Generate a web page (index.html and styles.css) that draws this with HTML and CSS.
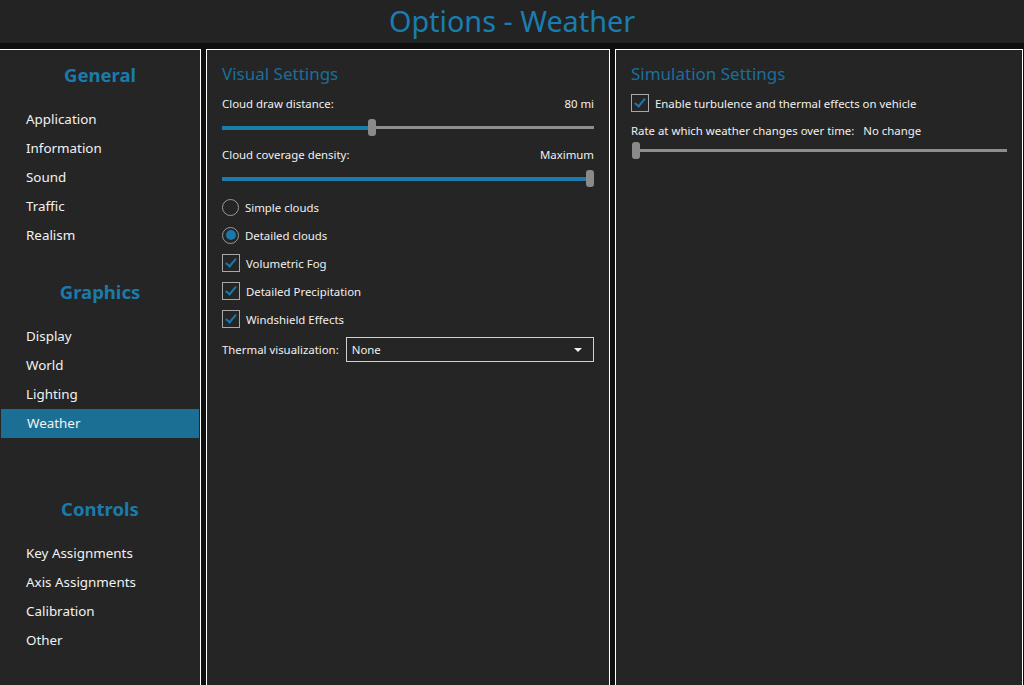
FILE: index.html
```html
<!DOCTYPE html>
<html lang="en">
  <head>
    <meta charset="UTF-8" />
    <meta name="viewport" content="width=device-width, initial-scale=1.0" />
    <title>Options - Weather</title>
    <link rel="stylesheet" href="styles.css">
  </head>
  <body>
    <div id="heading"><h1>Options - Weather</h1></div>
    <div class="panels">
      <div class="sidebar">
        <h2>General</h2>
        <ul class="menu">
          <li>Application</li>
          <li>Information</li>
          <li>Sound</li>
          <li>Traffic</li>
          <li>Realism</li>
        </ul>
        <h2>Graphics</h2>
        <ul class="menu">
          <li>Display</li>
          <li>World</li>
          <li>Lighting</li>
          <li class="active">Weather</li>
        </ul>
        <h2 class="controls">Controls</h2>
        <ul class="menu">
          <li>Key Assignments</li>
          <li>Axis Assignments</li>
          <li>Calibration</li>
          <li>Other</li>
        </ul>
      </div>

      <div class="box visual">
        <h3>Visual Settings</h3>
        <div class="row">
          <span>Cloud draw distance:</span>
          <span>80 mi</span>
        </div>
        <div class="slider">
          <div class="fill" style="width: 146px"></div>
          <div class="thumb"></div>
          <div class="rest"></div>
        </div>
        <div class="row">
          <span>Cloud coverage density:</span>
          <span>Maximum</span>
        </div>
        <div class="slider last">
          <div class="fill full"></div>
          <div class="thumb"></div>
        </div>
        <div class="option"><span class="radio"></span>Simple clouds</div>
        <div class="option"><span class="radio on"></span>Detailed clouds</div>
        <div class="option"><span class="check"></span>Volumetric Fog</div>
        <div class="option"><span class="check"></span>Detailed Precipitation</div>
        <div class="option"><span class="check"></span>Windshield Effects</div>
        <div class="thermal">
          <span>Thermal visualization:</span>
          <div class="select">None <span class="arrow"></span></div>
        </div>
      </div>

      <div class="box sim">
        <h3>Simulation Settings</h3>
        <div class="option"><span class="check"></span>Enable turbulence and thermal effects on vehicle</div>
        <div class="rate">Rate at which weather changes over time:&nbsp;&nbsp; No change</div>
        <div class="slider">
          <div class="thumb"></div>
          <div class="rest"></div>
        </div>
      </div>
    </div>
  </body>
</html>
```

FILE: styles.css
```css
body {
  margin: 0;
  padding: 0;
  font-family: "Noto Sans", "Open Sans", sans-serif;
  background: #0f0f0f;
  color: #f0f0f0;
  height: 685px;
  overflow: hidden;
}

#heading {
  height: 43px;
  background: #232323;
  text-align: center;
}
#heading h1 {
  margin: 0;
  font-weight: normal;
  font-size: 28.8px;
  line-height: 42px;
  color: #1a7db0;
}

.panels {
  display: flex;
  gap: 5px;
  padding-top: 6px;
  height: 636px;
}

.sidebar {
  width: 200px;
  background: #252525;
  border: 1px solid #fff;
  border-left: none;
  border-bottom: none;
}
.sidebar h2 {
  margin: 13px 0 18px;
  text-align: center;
  font-size: 18.5px;
  line-height: 24px;
  color: #1a7bab;
}
.sidebar h2.controls {
  margin-top: 59px;
}
.menu {
  list-style: none;
  margin: 0 0 30px;
  padding: 0;
}
.menu li {
  height: 29px;
  line-height: 29px;
  padding-left: 26px;
  font-size: 13.4px;
  color: #f2f2f2;
}
.menu li.active {
  background: #1b6f94;
  margin: 0 1px;
}

.box {
  background: #252525;
  border: 1px solid #fff;
  border-bottom: none;
  padding: 12px 15px 0;
  font-size: 11.4px;
}
.visual {
  width: 372px;
}
.sim {
  width: 376px;
}
.box h3 {
  margin: 0 0 10px;
  font-weight: normal;
  font-size: 17px;
  line-height: 24px;
  color: #1a6e9b;
}

.row {
  display: flex;
  justify-content: space-between;
  line-height: 16px;
}

.slider {
  display: flex;
  align-items: center;
  height: 17px;
  margin: 7px 0 11px;
}
.slider.last {
  margin-bottom: 6px;
}
.fill {
  height: 4px;
  background: #1b7cac;
}
.fill.full {
  flex: 1;
}
.rest {
  flex: 1;
  height: 3px;
  background: #8e8e8e;
}
.thumb {
  width: 8px;
  height: 17px;
  border-radius: 3px;
  background: #8a8a8a;
}

.option {
  display: flex;
  align-items: center;
  height: 28px;
}
.radio, .check {
  width: 15px;
  height: 15px;
  margin-right: 6px;
  box-sizing: content-box;
}
.radio {
  border: 1.5px solid #9a9a9a;
  border-radius: 50%;
  position: relative;
}
.radio.on::after {
  content: "";
  position: absolute;
  left: 2.5px;
  top: 2.5px;
  width: 10px;
  height: 10px;
  border-radius: 50%;
  background: #1a78aa;
}
.check {
  border: 1px solid #a8a8a8;
  width: 16px;
  height: 16px;
  position: relative;
}
.check::after {
  content: "";
  position: absolute;
  left: 5px;
  top: 1px;
  width: 4px;
  height: 9px;
  border: solid #1a78aa;
  border-width: 0 2.5px 2.5px 0;
  transform: rotate(40deg);
}

.thermal {
  display: flex;
  align-items: center;
  margin-top: 4px;
}
.thermal > span {
  margin-right: 7px;
}
.select {
  flex: 1;
  height: 23px;
  line-height: 23px;
  border: 1px solid #d0d0d0;
  padding-left: 5px;
  position: relative;
}
.arrow {
  position: absolute;
  right: 11px;
  top: 10px;
  border: 4px solid transparent;
  border-top: 4px solid #f0f0f0;
  border-bottom: none;
}

.sim h3 {
  margin-bottom: 5px;
}
.sim .option {
  height: 24px;
}
.rate {
  margin-top: 8px;
  line-height: 16px;
}
.sim .slider {
  margin-top: 3px;
  margin-left: 1px;
}
```
